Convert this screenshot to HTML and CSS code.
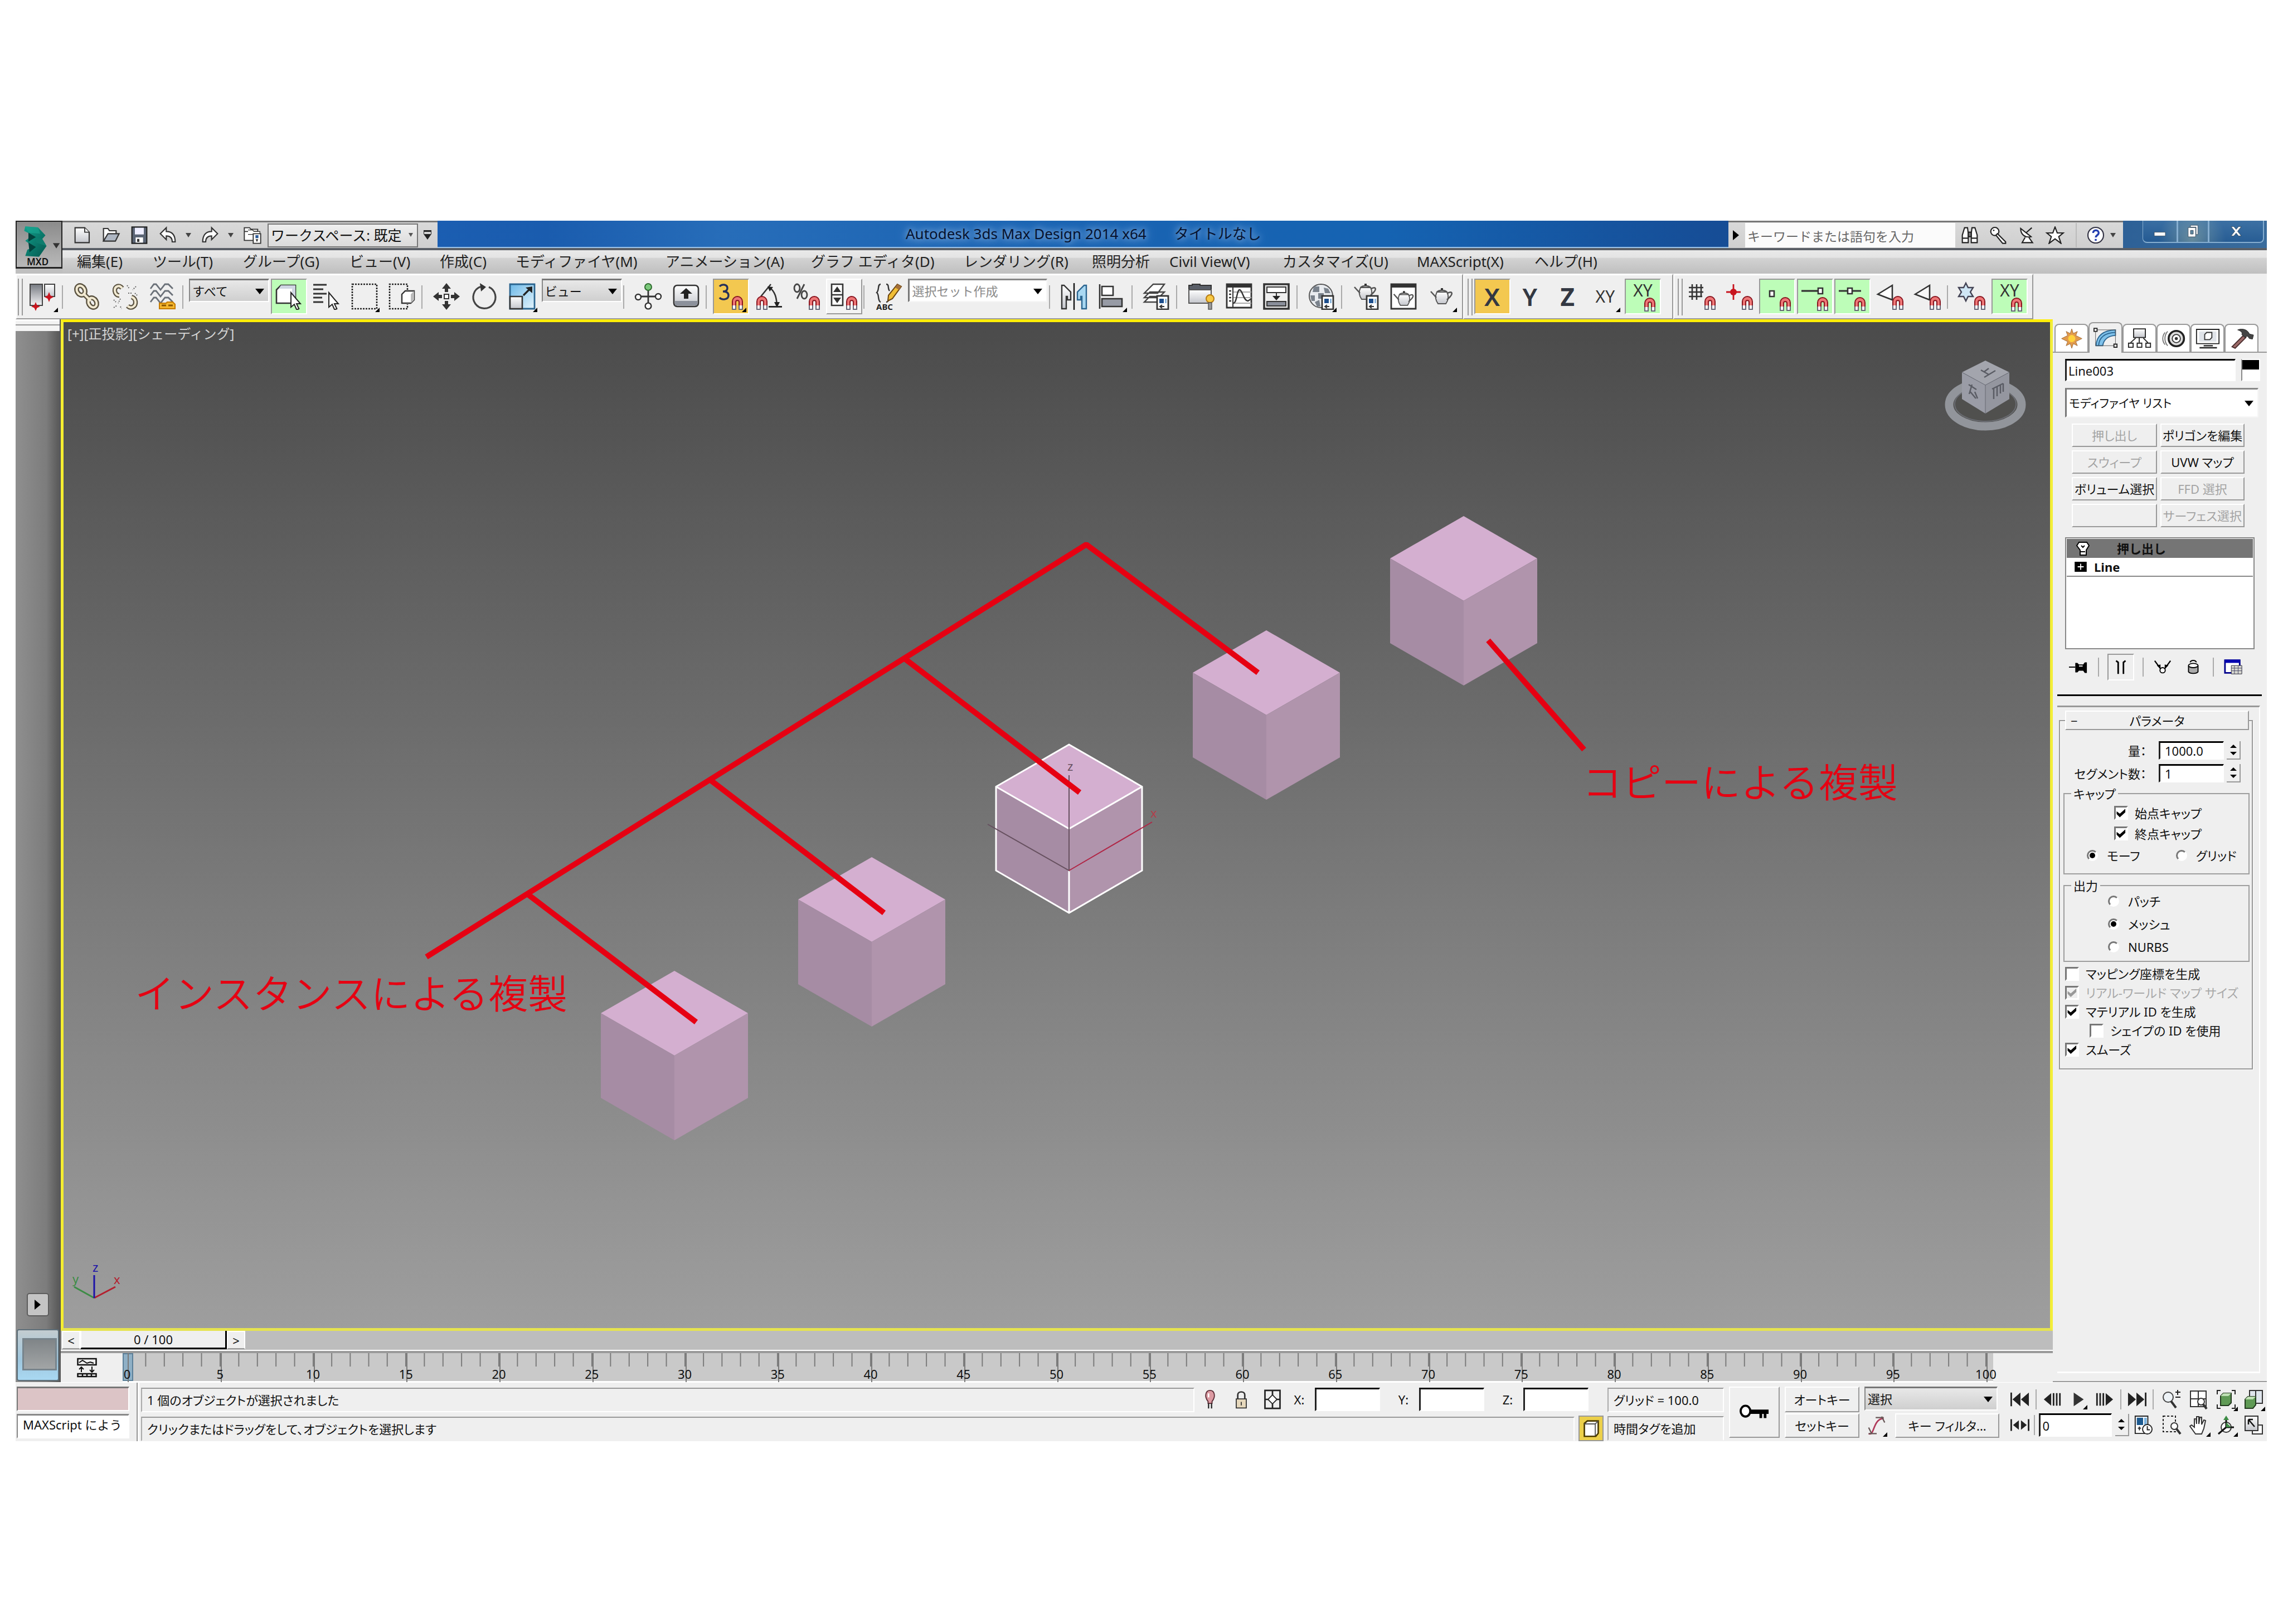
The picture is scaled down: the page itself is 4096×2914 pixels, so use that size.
FILE: index.html
```html
<!DOCTYPE html>
<html lang="ja">
<head>
<meta charset="utf-8">
<title>Autodesk 3ds Max Design 2014 x64 タイトルなし</title>
<link rel="stylesheet" href="styles.css">
</head>
<body>
<svg class="defs" aria-hidden="true">
  <defs>
    <linearGradient id="gTeal" x1="0" y1="0" x2="1" y2="1"><stop offset="0" stop-color="#12a08c"/><stop offset="1" stop-color="#04584f"/></linearGradient>
    <linearGradient id="gGray" x1="0" y1="0" x2="0" y2="1"><stop offset="0" stop-color="#fff"/><stop offset="1" stop-color="#c4c6cc"/></linearGradient>
    <linearGradient id="gDark" x1="0" y1="0" x2="0" y2="1"><stop offset="0" stop-color="#777b82"/><stop offset="1" stop-color="#f2f2f4"/></linearGradient>
    <linearGradient id="gBlue" x1="0" y1="0" x2="1" y2="1"><stop offset="0" stop-color="#6db9e8"/><stop offset="1" stop-color="#e4f4fc"/></linearGradient>
    <linearGradient id="gView" x1="0" y1="0" x2="0" y2="1"><stop offset="0" stop-color="#4b4b4b"/><stop offset="1" stop-color="#9e9e9e"/></linearGradient>
    <symbol id="mag" viewBox="0 0 24 24"><path d="M13.5 23.5V16.5a4.5 4.5 0 0 1 9 0v7h-3v-6.500a1.500 1.500 0 0 0-3 0v6.500z" fill="#e77" stroke="#8a1620"/><path d="M14 20h2v3h-2zM20 20h2v3h-2z" fill="#fff"/><path d="M13.500 20v3.500h3V20M19.500 20v3.500h3V20" fill="none" stroke="#667"/></symbol>
    <symbol id="page" viewBox="0 0 24 24"><rect x="12.500" y="11.500" width="10" height="12" fill="#fff" stroke="#333" stroke-width="1.400"/><path d="M14.500 14h4v4h-4z" fill="#1d4e8c"/><path d="M19.500 14h1.500v4h-1.500z" fill="#8bb6dd"/><path d="M15 21h4M17 19.500l-2 1.500 2 1.500" stroke="#333" fill="none"/></symbol>
    <symbol id="pot" viewBox="0 0 24 24"><path d="M8 8C6.500 11 6.500 15 9 18.500h7c2.500-3.500 2.500-7.500 1-10.500z" fill="url(#gGray)" stroke="#555"/><path d="M8 8c2-2 7-2 9 0M7.500 13L2.500 7.500M17.500 9c4-2 5 0 2.500 3l-3 3" fill="none" stroke="#555" stroke-width="1.300"/><path d="M11.500 6.200h2V4.500h-2z" fill="#333"/></symbol>
    <symbol id="cursor" viewBox="0 0 24 24"><path d="M14 8.500v13l3-2.500 2.200 5 2-1-2.200-4.500h3.500z" fill="#fff" stroke="#222"/></symbol>
  </defs>
</svg>

<main class="app">
  <header class="head">
    <button class="appbtn" aria-label="MXD">
      <svg viewBox="0 0 84 86"><g transform="translate(0 2) scale(1 .84)"><path d="M14 8l24 2 14 18-6 8 8 16-14 24-26-2 4-14 12-6-16-14 14-12-16-10z" fill="url(#gTeal)"/><path d="M20 22l14 10-14 10M20 44l14 10-12 12" fill="#02423c"/><path d="M34 32l12 4 8 16-20-8z" fill="#0d7d6e"/><path d="M14 8l24 2 4 14-22-2z" fill="#1aa893" opacity=".6"/></g><path d="M66 40h13l-6.500 10z" fill="#333"/></svg>
      <span>MXD</span>
    </button>
    <div class="titlebar">
      <div class="qat">
        <button class="q" aria-label="新規"><svg viewBox="0 0 24 24"><path d="M2 2h13l6 6v14H2z" fill="url(#gGray)" stroke="#333" stroke-width="1.600"/><path d="M15 2v6h6" fill="#fff" stroke="#333" stroke-width="1.400"/></svg></button>
        <button class="q" aria-label="開く"><svg viewBox="0 0 24 24"><path d="M2 20V3h6l2 3h9v4" fill="#fff" stroke="#333" stroke-width="1.600"/><path d="M2 20l6-10h15l-5 10z" fill="#aeb6c2" stroke="#333" stroke-width="1.600"/></svg></button>
        <button class="q" aria-label="保存"><svg viewBox="0 0 24 24"><path d="M2 1h20v22H2z" fill="#5a6474" stroke="#222" stroke-width="1.600"/><path d="M6 2h12v9H6z" fill="#eef"/><path d="M7 15h10v7H7z" fill="#fff"/><path d="M9 17h3v4H9z" fill="#333"/></svg></button>
        <button class="q" aria-label="元に戻す"><svg viewBox="0 0 24 24"><path d="M2 10l8-8v5c8 0 12 5 12 14h-4c0-5-2-8-8-8v5z" fill="#fff" stroke="#333" stroke-width="1.600"/></svg></button>
        <i class="tri sm"></i>
        <button class="q" aria-label="やり直し"><svg viewBox="0 0 24 24"><path d="M22 10l-8-8v5C6 7 2 12 2 21h4c0-5 2-8 8-8v5z" fill="#fff" stroke="#333" stroke-width="1.600"/></svg></button>
        <i class="tri sm"></i>
        <button class="q" aria-label="プロジェクト"><svg viewBox="0 0 24 24"><path d="M1 19V2h7l2 2h9v15zM1 7h18" fill="#fff" stroke="#333" stroke-width="1.400"/><path d="M6 5h6l2 2h8v4H6" fill="#fff" stroke="#333"/><path d="M13 10h10v13H13z" fill="#fff" stroke="#333" stroke-width="1.400"/><path d="M16 12h4v4h-4z" fill="#2a5a98"/><path d="M17 18l1 2 1-2z" stroke="#333"/></svg></button>
        <span class="combo ws"><select aria-label="ワークスペース"><option>ワークスペース: 既定</option></select></span>
        <i class="tri bar"></i>
      </div>
      <h1 class="caption"><span>Autodesk 3ds Max Design 2014 x64</span><span>タイトルなし</span></h1>
      <div class="info">
        <i class="triR"></i>
        <input class="search" type="text" placeholder="キーワードまたは語句を入力" aria-label="検索">
        <button class="q" aria-label="検索"><svg viewBox="0 0 24 24"><path d="M5 2h4l1 8v12H2V12zM15 2h4l3 10v10h-8V10z" fill="#fff" stroke="#222" stroke-width="1.600"/><path d="M10 8h4v6h-4zM2 16h8M14 16h8" stroke="#222" stroke-width="1.600" fill="#777"/></svg></button>
        <button class="q" aria-label="サブスクリプション"><svg viewBox="0 0 24 24"><circle cx="7.500" cy="7" r="5.500" fill="#fff" stroke="#222" stroke-width="1.600"/><path d="M11 10l11 11v2h-4L9 12z" fill="#fff" stroke="#222" stroke-width="1.600"/><circle cx="6" cy="5.500" r="1" fill="#222"/></svg></button>
        <button class="q" aria-label="通信センター"><svg viewBox="0 0 24 24"><path d="M4 3c0 8 6 13 14 11z" fill="#fff" stroke="#222" stroke-width="1.600"/><path d="M11 9l8-7M10 15l-4 7h14l-5-7" fill="#fff" stroke="#222" stroke-width="1.600"/></svg></button>
        <button class="q" aria-label="お気に入り"><svg viewBox="0 0 24 24"><path d="M12 1l3 8h8l-6 5 3 9-8-6-8 6 3-9-6-5h8z" fill="#fff" stroke="#222" stroke-width="1.600"/></svg></button>
        <i class="vline"></i>
        <button class="q" aria-label="ヘルプ"><svg viewBox="0 0 24 24"><circle cx="12" cy="12" r="10.500" fill="#fff" stroke="#334" stroke-width="1.600"/><path d="M8.500 9c0-5 7.500-4.500 7.500 0 0 3-4 3-4 6M12 17v2.500" fill="none" stroke="#2540b0" stroke-width="2.600"/></svg></button>
        <i class="tri sm"></i>
      </div>
      <div class="wbtns">
        <button aria-label="最小化"><svg viewBox="0 0 40 36"><path d="M8 20h24v8H8z" fill="#fff" stroke="#345"/></svg></button>
        <button aria-label="元のサイズに戻す"><svg viewBox="0 0 40 36"><path d="M14 5h16v20h-4V9H14z" fill="#fff" stroke="#345"/><path d="M9 10h16v20H9zM14 16v8h6v-8z" fill="#fff" fill-rule="evenodd" stroke="#345"/></svg></button>
        <button aria-label="閉じる"><svg viewBox="0 0 40 36"><path d="M9 8h6l5 6 5-6h6l-8 10 8 10h-6l-5-6-5 6H9l8-10z" fill="#fff" stroke="#345"/></svg></button>
      </div>
    </div>
    <nav class="menu">
      <a href="#">編集(E)</a><a href="#">ツール(T)</a><a href="#">グループ(G)</a><a href="#">ビュー(V)</a><a href="#">作成(C)</a><a href="#">モディファイヤ(M)</a><a href="#">アニメーション(A)</a><a href="#">グラフ エディタ(D)</a><a href="#">レンダリング(R)</a><a href="#">照明分析</a><a href="#">Civil View(V)</a><a href="#">カスタマイズ(U)</a><a href="#">MAXScript(X)</a><a href="#">ヘルプ(H)</a>
    </nav>
  </header>

  <div class="toolbars">
    <div class="tb tb-main">
      <i class="grip"></i>
      <button class="t more" aria-label="キー"><svg viewBox="0 0 24 24"><path d="M1 1h11v19H1z" fill="url(#gDark)" stroke="#444"/><path d="M14 1h9v11h-9z" fill="url(#gGray)" stroke="#444"/><path d="M6 17l1.200 2.800L10 21l-2.800 1.200L6 25l-1.200-2.800L2 21l2.800-1.200zM18 8l1.200 3L22 12.500 19.200 14 18 17l-1.200-3L14 12.500l2.800-1.500z" fill="#c8141e"/></svg></button>
      <i class="sep"></i>
      <button class="t" aria-label="リンク"><svg viewBox="0 0 24 24"><g fill="none" stroke="#5a5240" stroke-width="4.400"><ellipse cx="6.500" cy="6.500" rx="3.500" ry="4.500" transform="rotate(-30 6.500 6.500)"/><ellipse cx="17" cy="17.500" rx="3.500" ry="4.500" transform="rotate(-30 17 17.500)"/><path d="M8.500 9l7 7"/></g><g fill="none" stroke="#f2ead2" stroke-width="2"><ellipse cx="6.500" cy="6.500" rx="3.500" ry="4.500" transform="rotate(-30 6.500 6.500)"/><ellipse cx="17" cy="17.500" rx="3.500" ry="4.500" transform="rotate(-30 17 17.500)"/><path d="M8.500 9l7 7"/></g></svg></button>
      <button class="t" aria-label="リンク解除"><svg viewBox="0 0 24 24"><g fill="none" stroke="#5a5240" stroke-width="4.200"><path d="M9.500 4.500C7 1 2.500 3 3 7c.300 2 1.500 4 4 4M14.500 20.500c3 3 7.500.5 7-4-.3-2-1.500-3.500-3.500-4"/></g><g fill="none" stroke="#f2ead2" stroke-width="2"><path d="M9.500 4.500C7 1 2.500 3 3 7c.300 2 1.500 4 4 4M14.500 20.500c3 3 7.500.5 7-4-.3-2-1.500-3.500-3.500-4"/></g><path d="M14 2l2 3M22 3l-3 3M15 9h3M21 9l2 2M2 15l2 2M8 14l-2 4M2 22l3-2M8 21l1 2" stroke="#666" stroke-dasharray="1 1"/></svg></button>
      <button class="t" aria-label="バインド"><svg viewBox="0 0 24 24"><path d="M1 5l3-4h2l4 5 4-5h3l4 4M1 11l3-4h2l4 5 4-5h3l4 4M1 17l3-4h2l4 5 4-5h3l4 4" fill="none" stroke="#6a7078" stroke-width="1.400"/><path d="M9 18h6l1-1h5l2 2v4H9z" fill="#f3b62e" stroke="#c47a00"/><path d="M11 20h4M17 20h4" stroke="#8a5500" stroke-width="1.500"/></svg></button>
      <i class="sep"></i>
      <span class="combo grey c144"><select aria-label="選択フィルタ"><option>すべて</option></select></span>
      <button class="t on" aria-label="オブジェクトを選択"><svg viewBox="0 0 24 24"><path d="M1 6l4-4h13v12l-3 4H1z" fill="#fff" stroke="#333" stroke-width="1.300"/><path d="M5 2h13v12l-3 3V5H3z" fill="#cfd6e2"/><use href="#cursor"/></svg></button>
      <button class="t" aria-label="名前で選択"><svg viewBox="0 0 24 24"><path d="M0 1.500h12M0 5.500h9M0 9.500h12M0 13h8M0 17h9" stroke="#333" stroke-width="1.400"/><use href="#cursor"/></svg></button>
      <button class="t more" aria-label="矩形選択領域"><svg viewBox="0 0 24 24"><path d="M1 1h22v22H1z" fill="none" stroke="#222" stroke-width="1.300" stroke-dasharray="1.500 1"/></svg></button>
      <button class="t" aria-label="ウィンドウ/交差"><svg viewBox="0 0 24 24"><path d="M17 6V1H1v22h16v-4" fill="none" stroke="#222" stroke-width="1.300" stroke-dasharray="1.500 1"/><path d="M12 10l3-3h8v8l-3 3h-8z" fill="#fff" stroke="#333" stroke-width="1.200"/><path d="M20 10v8l3-3V7z" fill="#bbb"/></svg></button>
      <i class="sep"></i>
      <button class="t" aria-label="移動"><svg viewBox="0 0 24 24"><path d="M12 0l4 5h-2.500v3h-3V5H8zM12 24l-4-5h2.500v-3h3v3H16zM0 12l5-4v2.500h3v3H5V16zM24 12l-5 4v-2.500h-3v-3h3V8z" fill="#333"/><path d="M10 10h4v4h-4z" fill="#fff" stroke="#333"/></svg></button>
      <button class="t" aria-label="回転"><svg viewBox="0 0 24 24"><path d="M16 3.500a10 10 0 1 1-7.500-.2" fill="none" stroke="#444" stroke-width="1.600"/><path d="M8 0l5.500 3.500L9 7.500z" fill="#333"/></svg></button>
      <button class="t more" aria-label="スケール"><svg viewBox="0 0 24 24"><path d="M1 1h22v22H1z" fill="url(#gBlue)" stroke="#2b6590" stroke-width="1.400"/><path d="M1 12h11v11H1z" fill="url(#gGray)" stroke="#333" stroke-width="1.300"/><path d="M13 11l6-6" stroke="#222" stroke-width="1.600"/><path d="M21 3v6l-6-5z" fill="#222"/></svg></button>
      <span class="combo grey c144"><select aria-label="参照座標系"><option>ビュー</option></select></span>
      <i class="sep"></i>
      <button class="t" aria-label="基点"><svg viewBox="0 0 24 24"><path d="M12 6v12M5 12h14" stroke="#333" stroke-width="1.400"/><ellipse cx="12" cy="3.500" rx="3" ry="3" fill="#7bc87b" stroke="#2d6b2d"/><g fill="#fff" stroke="#333" stroke-width="1.200"><circle cx="3" cy="12.500" r="2.500"/><circle cx="21" cy="12" r="2.500"/><circle cx="12" cy="20.500" r="2.700"/></g></svg></button>
      <button class="t" aria-label="マニピュレート"><svg viewBox="0 0 24 24"><rect x="1" y="2" width="22" height="19" rx="3" fill="url(#gGray)" stroke="#333" stroke-width="1.300"/><path d="M2 16h20v4H2z" fill="#8c919b"/><path d="M12 4.500l5.500 5H14V14h-4V9.500H6.500z" fill="#222"/></svg></button>
      <i class="sep"></i>
      <button class="t amber more" aria-label="スナップ 3"><svg viewBox="0 0 24 24"><path d="M2 3c2-2.500 7-2 7 1.500 0 2.500-2 3-4 3 2 0 5 .5 5 3.500 0 4-6 4.500-8 2" fill="none" stroke="#26305a" stroke-width="1.700"/><use href="#mag"/></svg></button>
      <button class="t" aria-label="角度スナップ"><svg viewBox="0 0 24 24"><path d="M5 12L14 1M13 4c5 4 6 9 6.500 16" fill="none" stroke="#333" stroke-width="1.300"/><path d="M11 3l5 .5-3 4zM17 17h5l-2.500 5zM12 20.500h12v1.400H12z" fill="#222"/><use href="#mag" x="-12"/></svg></button>
      <button class="t" aria-label="パーセントスナップ"><svg viewBox="0 0 24 24"><g fill="none" stroke="#444" stroke-width="1.400"><ellipse cx="3.500" cy="4.500" rx="2.500" ry="3.500"/><ellipse cx="10" cy="10.500" rx="2.500" ry="3.500"/><path d="M10 1L3.500 14"/></g><use href="#mag" x="1"/></svg></button>
      <button class="t raised" aria-label="スピナースナップ"><svg viewBox="0 0 24 24"><path d="M1 1h10v19H1zM1 10.500h10" fill="#fff" stroke="#333" stroke-width="1.300"/><path d="M6 3l3.500 5h-7zM6 18l-3.500-5h7z" fill="#333"/><use href="#mag" x="1"/></svg></button>
      <i class="sep"></i>
      <button class="t" aria-label="名前付き選択セット"><svg viewBox="0 0 24 24"><path d="M5 1C2 1 4 6 1.500 8.500 4 10 2 16 5 17M10 1c3 0 1 4 3 6M10 17c3 0 1-3 3-5" fill="none" stroke="#333" stroke-width="1.200"/><path d="M20 1l3.500 2-8 11-4 2 .5-5z" fill="#f0bd35" stroke="#6a4310"/><path d="M20 1l3.500 2-2 3-3.500-2z" fill="#a5703a"/><text x="1" y="24" font-size="7.500" font-weight="bold" fill="#222">ABC</text></svg></button>
      <span class="combo white c250"><select aria-label="選択セット作成"><option>選択セット作成</option></select></span>
      <i class="sep"></i>
      <button class="t" aria-label="ミラー"><svg viewBox="0 0 24 24"><path d="M1 23V2h2l6 6v7H6v-3H5v11z" fill="url(#gGray)" stroke="#333" stroke-width="1.200"/><path d="M23 23V2h-2l-6 6v7h3v-3h1v11z" fill="#a9d8f2" stroke="#2b6590" stroke-width="1.200"/><path d="M12 0v24" stroke="#111" stroke-width="1.200"/></svg></button>
      <button class="t more" aria-label="位置合わせ"><svg viewBox="0 0 24 24"><path d="M1 1v22" stroke="#333" stroke-width="1.300"/><path d="M3 3h10v8H3z" fill="#fff" stroke="#333" stroke-width="1.300"/><path d="M3 14h18v7H3z" fill="#979ba5" stroke="#333" stroke-width="1.300"/></svg></button>
      <i class="sep"></i>
      <button class="t" aria-label="レイヤ管理"><svg viewBox="0 0 24 24"><g fill="#fff" stroke="#444" stroke-width="1.200"><path d="M1 17l5-5h13l-5 5zM1 13l5-5h13l-5 5zM1 9l8-8h10l-6 8z"/></g><use href="#page"/></svg></button>
      <i class="sep"></i>
      <button class="t" aria-label="グラファイト"><svg viewBox="0 0 24 24"><path d="M1 5V2h3V1h7v1h10v15H1z" fill="#5a5f68" stroke="#333"/><path d="M1 6h20v12H1z" fill="url(#gGray)" stroke="#555"/><circle cx="20" cy="14" r="3.500" fill="#f7c945" stroke="#b77b10"/><path d="M18.500 17.500h3v6h-3z" fill="#999" stroke="#555" stroke-width=".7"/></svg></button>
      <button class="t" aria-label="カーブエディタ"><svg viewBox="0 0 24 24"><path d="M1 1h22v21H1z" fill="#fff" stroke="#333" stroke-width="1.400"/><path d="M1 1h22v3H1z" fill="#333"/><path d="M7 8h16M7 18h16M7 13h16" stroke="#aaa"/><path d="M6.500 4v18" stroke="#333"/><path d="M3 7h2M3 10h2M3 13h2M3 16h2" stroke="#333" stroke-width="1.300"/><path d="M7 18c3 0 3-12 5.500-12S16 16 20 16l3-2" fill="none" stroke="#333" stroke-width="1.200"/></svg></button>
      <button class="t" aria-label="スケマティックビュー"><svg viewBox="0 0 24 24"><path d="M1 1h22v22H1z" fill="#eee" stroke="#333" stroke-width="1.800"/><path d="M3.500 3.500h17v5h-17z" fill="#fff" stroke="#333"/><path d="M3.500 16.500h17v4h-17z" fill="#8a8f9a" stroke="#333"/><path d="M12 8.500V12" stroke="#333"/><path d="M8.500 11.500h7L12 15.500z" fill="#222"/></svg></button>
      <i class="sep"></i>
      <button class="t more" aria-label="マテリアルエディタ"><svg viewBox="0 0 24 24"><circle cx="11.500" cy="11.500" r="10.500" fill="#e8ebef" stroke="#555"/><path d="M5 3h5v5H4zM14 4l4 1 2 4h-5zM9 9h5v5H9zM2 11h4v5H3zM6 17l4-2 1 6H8z" fill="#7a828c"/><use href="#page"/></svg></button>
      <i class="sep"></i>
      <button class="t" aria-label="レンダリング設定"><svg viewBox="0 0 24 24"><use href="#pot" x="-1" y="-4"/><use href="#page"/></svg></button>
      <button class="t" aria-label="レンダリングウィンドウ"><svg viewBox="0 0 24 24"><path d="M1 1h22v22H1z" fill="#fff" stroke="#333" stroke-width="1.400"/><path d="M1 1h22v3H1z" fill="#333"/><use href="#pot" x="1" y="3" width="22" height="22"/></svg></button>
      <button class="t more" aria-label="レンダリング"><svg viewBox="0 0 24 24"><use href="#pot"/></svg></button>
    </div>
    <div class="tb tb-axis">
      <i class="grip"></i>
      <button class="t amber big">X</button><button class="t big">Y</button><button class="t bigger">Z</button><button class="t more mid">XY</button>
      <button class="t on mid up">XY<svg class="lay" viewBox="0 0 24 24"><use href="#mag" y="1"/></svg></button>
    </div>
    <div class="tb tb-snap">
      <i class="grip"></i>
      <button class="t" aria-label="グリッド点"><svg viewBox="0 0 24 24"><path d="M3 1v14M7 1v14M11 1v11M0 4h13M0 8h13M0 12h12" stroke="#333" stroke-width="1.300"/><use href="#mag" x="1"/></svg></button>
      <button class="t" aria-label="基点"><svg viewBox="0 0 24 24"><path d="M6.500 1v14M0 8h13" stroke="#c8141e" stroke-width="1.400"/><circle cx="6.500" cy="8" r="3" fill="#c8141e"/><use href="#mag" x="1"/></svg></button>
      <button class="t on" aria-label="頂点"><svg viewBox="0 0 24 24"><path d="M5 7h4v5H5z" fill="#fff" stroke="#333" stroke-width="1.300"/><use href="#mag" x="1" y="1"/></svg></button>
      <button class="t on" aria-label="終点"><svg viewBox="0 0 24 24"><path d="M0 7h16" stroke="#333" stroke-width="1.600"/><path d="M15 4.500h4v5h-4z" fill="#fff" stroke="#333" stroke-width="1.300"/><use href="#mag" x="1" y="1"/></svg></button>
      <button class="t on" aria-label="中点"><svg viewBox="0 0 24 24"><path d="M0 7h20" stroke="#333" stroke-width="1.600"/><path d="M8 4.500h4v5H8z" fill="#fff" stroke="#333" stroke-width="1.300"/><use href="#mag" x="1" y="1"/></svg></button>
      <button class="t" aria-label="エッジ"><svg viewBox="0 0 24 24"><path d="M1 10L14 2v13z" fill="#fff" stroke="#333" stroke-width="1.300"/><use href="#mag" x="1"/></svg></button>
      <button class="t" aria-label="フェース"><svg viewBox="0 0 24 24"><path d="M1 10L14 2v13z" fill="#f8f8f8" stroke="#333" stroke-width="1.300"/><use href="#mag" x="1"/></svg></button>
      <i class="sep"></i>
      <button class="t" aria-label="フリーズ"><svg viewBox="0 0 24 24"><path d="M6.500 0l2 4h4.500l-2.500 4 2.500 4H8.500l-2 4-2-4H0l2.500-4L0 4h4.500z" fill="#cfe6f5" stroke="#445" stroke-width="1.200"/><use href="#mag" x="1"/></svg></button>
      <button class="t on mid up">XY<svg class="lay" viewBox="0 0 24 24"><use href="#mag" y="1"/></svg></button>
    </div>
  </div>

  <div class="work">
    <aside class="rail">
      <div class="railtop"></div>
      <button class="expand" aria-label="展開"><i class="triR"></i></button>
      <div class="swatch"><div></div></div>
    </aside>

    <section class="center">
      <div class="viewport">
        <svg class="scene" viewBox="114 578 3564 1805">
          <defs>
            <g id="cube"><path d="M0 0L132 76 0 152-132 76z" fill="#d4afd0"/><path d="M-132 76L0 152V304L-132 228z" fill="#a68ca4"/><path d="M132 76L0 152V304L132 228z" fill="#b094ac"/></g>
          </defs>
          <rect x="114" y="578" width="3564" height="1805" fill="url(#gView)"/>
          <text x="121" y="608" class="vlabel">[+][正投影][シェーディング]</text>
          <g>
            <ellipse cx="3562" cy="726" rx="65" ry="39" fill="#50504e" stroke="#92959b" stroke-width="15"/>
            <ellipse cx="3562" cy="725" rx="55" ry="31" fill="none" stroke="#6a6c72" stroke-width="2"/>
            <path d="M3562 647L3605 668 3562 691 3520 668z" fill="#a3a5ad"/><path d="M3520 668L3562 691V742L3520 716z" fill="#9a9ca6"/><path d="M3605 668L3562 691V742L3605 716z" fill="#94969f"/>
            <path d="M3520 668L3562 691 3605 668M3562 691V742" fill="none" stroke="#666872" stroke-width="1"/>
            <g stroke="#5a5c64" stroke-width="2.500" fill="none"><path d="M3554 664l14 8M3568 661l-8 6M3580 665l-20 12M3532 690l14 9M3538 690l-5 17M3535 703l10 12M3543 703l5 12M3574 698l20-10M3577 696v20M3583 693v18M3589 690v16M3594 688v15"/></g>
          </g>
          <use href="#cube" x="1210" y="1742"/><use href="#cube" x="1564" y="1538"/><use href="#cube" x="1918" y="1335"/><use href="#cube" x="2272" y="1131"/><use href="#cube" x="2626" y="926"/>
          <path d="M1918 1336L2049 1411.500V1562L1918 1638 1787 1562V1411.500zM1787 1411.500L1918 1487 2049 1411.500M1918 1562V1638" fill="none" stroke="#fff" stroke-width="3"/>
          <g fill="none" stroke-width="2"><path d="M1918 1391V1562L1772 1479" stroke="#66505f"/><path d="M1918 1562L2067 1475" stroke="#b02545"/></g>
          <text x="1915" y="1383" class="ax" fill="#66505f">z</text>
          <text x="2064" y="1467" class="ax" fill="#b0404c">x</text>
          <g fill="none" stroke="#e60012" stroke-width="10"><path d="M765 1717L1949 977 2257 1207M1622 1181L1937 1422M1275 1400L1586 1638M946 1604L1249 1834M2670 1149L2842 1345" stroke-linejoin="bevel"/></g>
          <text x="242" y="1809" class="note">インスタンスによる複製</text>
          <text x="2839" y="1430" class="note">コピーによる複製</text>
          <g fill="none" stroke-width="3"><path d="M169 2329L133 2309" stroke="#3d8c46"/><path d="M169 2329L207 2309" stroke="#b3202f"/><path d="M169 2329V2288" stroke="#1c12a8"/></g>
          <text x="166" y="2282" class="ax" fill="#1c12a8">z</text><text x="130" y="2303" class="ax" fill="#3d8c46">y</text><text x="204" y="2304" class="ax" fill="#b3202f">x</text>
        </svg>
      </div>
      <div class="slider"><button>&lt;</button><button class="thumb">0 / 100</button><button>&gt;</button></div>
      <div class="track">
        <button class="mini" aria-label="ミニカーブエディタ"><svg viewBox="0 0 36 36"><path d="M1.500 2h33v11h-33zM1.500 29h33v5h-33zM10 29v5M18 29v5M26 29v5" fill="none" stroke="#111" stroke-width="2.500"/><path d="M4 9l6-4 8 5 6-2 6 2" fill="none" stroke="#111" stroke-width="2"/><path d="M8 26V18M4 21l4-4 4 4M27 16v9M23 22l4 4 4-4" fill="none" stroke="#111" stroke-width="2"/></svg></button>
        <div class="ruler">
          <span class="now"></span>
          <div class="ticks">
            <div><b>0</b></div><div><b>5</b></div><div><b>10</b></div><div><b>15</b></div><div><b>20</b></div><div><b>25</b></div><div><b>30</b></div><div><b>35</b></div><div><b>40</b></div><div><b>45</b></div><div><b>50</b></div><div><b>55</b></div><div><b>60</b></div><div><b>65</b></div><div><b>70</b></div><div><b>75</b></div><div><b>80</b></div><div><b>85</b></div><div><b>90</b></div><div><b>95</b></div>
          </div>
          <div class="last"><b>100</b></div>
        </div>
      </div>
    </section>

    <aside class="panel">
      <div class="tabs">
        <button aria-label="作成"><svg viewBox="0 0 48 40"><path d="M24 1l3 9 8-4-3 8 12 6-12 6 3 8-8-4-3 9-3-9-8 4 3-8L4 20l12-6-3-8 8 4z" fill="#e29a4c" stroke="#9c6a3a"/><circle cx="24" cy="20" r="7" fill="#ffd23c"/></svg></button>
        <button class="cur" aria-label="修正"><svg viewBox="0 0 48 40"><path d="M5 35C6 16 18 5 43 4v11C28 16 20 23 18 35z" fill="#7ec1ea" stroke="#2b6590" stroke-width="2"/><path d="M10 35C11 20 21 10 43 9" fill="none" stroke="#2b6590" stroke-width="2"/><path d="M4 4h39M4 4v31h39V4" fill="none" stroke="#555"/><path d="M1 1h6v6H1zM40 32h6v6h-6z" fill="#fff" stroke="#222" stroke-width="2"/></svg></button>
        <button aria-label="階層"><svg viewBox="0 0 48 40"><path d="M12 1h23v17H12z" fill="url(#gGray)" stroke="#222" stroke-width="2"/><path d="M23 18v10M16 19L6 28M31 19l9 9" stroke="#222" stroke-width="2"/><path d="M2 29h9v8H2zM19 29h9v8h-9zM36 29h9v8h-9z" fill="#fff" stroke="#222" stroke-width="2"/></svg></button>
        <button aria-label="モーション"><svg viewBox="0 0 48 40"><circle cx="29" cy="20" r="15" fill="#ddd" stroke="#222" stroke-width="4"/><circle cx="29" cy="20" r="8" fill="#fff" stroke="#333" stroke-width="2"/><circle cx="29" cy="20" r="3" fill="#333"/><path d="M12 6C5 14 5 26 12 34M7 8C1 15 1 25 7 32" fill="none" stroke="#777" stroke-width="2"/></svg></button>
        <button aria-label="表示"><svg viewBox="0 0 48 40"><path d="M2 2h44v28H2z" fill="#fff" stroke="#222" stroke-width="2"/><path d="M7 6h34v20H7z" fill="#dfe3e8"/><path d="M18 12l4-4h10v10l-4 4H18z" fill="#fff" stroke="#333" stroke-width="2"/><path d="M16 34h18M8 38h34" stroke="#222" stroke-width="2.500"/></svg></button>
        <button aria-label="ユーティリティ"><svg viewBox="0 0 48 40"><path d="M5 36L27 14l5 4L11 39z" fill="#9c6a68" stroke="#4a2e2e" stroke-width="2"/><path d="M16 3c10-4 20 0 23 8l8 2-2 8-6-1-4-5-5 3-6-6c2-4-2-7-8-9z" fill="#444" stroke="#222"/></svg></button>
      </div>
      <div class="namerow"><input type="text" value="Line003" aria-label="名前"><span class="color"></span></div>
      <span class="combo white modlist"><select aria-label="モディファイヤ リスト"><option>モディファイヤ リスト</option></select></span>
      <div class="mods">
        <button disabled>押し出し</button><button>ポリゴンを編集</button>
        <button disabled>スウィープ</button><button>UVW マップ</button>
        <button>ボリューム選択</button><button disabled>FFD 選択</button>
        <button disabled aria-label="空"></button><button disabled>サーフェス選択</button>
      </div>
      <ul class="stack">
        <li class="sel"><svg viewBox="0 0 24 28"><path d="M5 3h14l4 6-5 8v9H7v-9L1 9z" fill="#fff" stroke="#000" stroke-width="2"/><path d="M8 20h8M9 9l3 3 3-3" stroke="#000" fill="none" stroke-width="2"/></svg><span>押し出し</span></li>
        <li><svg viewBox="0 0 24 20"><path d="M0 0h24v20H0z"/><path d="M6 10h12M12 4v12" stroke="#fff" stroke-width="2"/></svg><span>Line</span></li>
      </ul>
      <div class="stacktools">
        <button aria-label="スタックをピン固定"><svg viewBox="0 0 36 30"><path d="M0 15h12" stroke="#000" stroke-width="2"/><path d="M12 7h4l3 3h8l3-4h4v20h-4l-3-4h-8l-3 3h-4z"/><path d="M19 13h7" stroke="#fff" stroke-width="2"/></svg></button>
        <i></i>
        <button class="pressed" aria-label="最終結果表示"><svg viewBox="0 0 36 30"><path d="M9 3l4 3v22M27 3l-4 3v22" fill="none" stroke="#000" stroke-width="3"/></svg></button>
        <i></i>
        <button aria-label="固有にする"><svg viewBox="0 0 36 30"><path d="M3 3l11 15M33 3L22 18" stroke="#000" stroke-width="2.500"/><circle cx="18" cy="21" r="5" fill="#fff" stroke="#000" stroke-width="2"/><path d="M7 12l7 6v-8zM29 12l-7 6v-8z"/></svg></button>
        <button aria-label="モディファイヤを除去"><svg viewBox="0 0 36 30"><path d="M9 12v12c3 4 15 4 18 0V12" fill="#aaa" stroke="#000" stroke-width="2"/><ellipse cx="18" cy="12" rx="9" ry="4" fill="#fff" stroke="#000" stroke-width="2"/><path d="M12 6c2-5 10-5 12 0" fill="none" stroke="#000" stroke-width="2"/></svg></button>
        <i></i>
        <button aria-label="モディファイヤセットを設定"><svg viewBox="0 0 36 30"><path d="M2 2h28v24H2z" fill="#fff" stroke="#00008c" stroke-width="3"/><path d="M2 1h28v6H2z" fill="#0000b0"/><path d="M14 12h20v16H14z" fill="#d8d8d0" stroke="#223"/><path d="M14 17h20M14 22h20M20 12v16M27 12v16" stroke="#446"/></svg></button>
      </div>
      <hr class="rule">
      <div class="scroll">
        <section class="rollout">
          <button class="rhead"><span>−</span><span>パラメータ</span></button>
          <div class="num"><label for="amt">量：</label><input id="amt" type="text" value="1000.0"><span class="spin"><i></i><i></i></span></div>
          <div class="num"><label for="seg">セグメント数：</label><input id="seg" type="text" value="1"><span class="spin"><i></i><i></i></span></div>
          <fieldset class="cap"><legend>キャップ</legend>
            <label class="opt"><input type="checkbox" checked>始点キャップ</label>
            <label class="opt"><input type="checkbox" checked>終点キャップ</label>
            <div class="two"><label class="opt"><input type="radio" name="cap" checked>モーフ</label><label class="opt"><input type="radio" name="cap">グリッド</label></div>
          </fieldset>
          <fieldset class="out"><legend>出力</legend>
            <label class="opt"><input type="radio" name="out">パッチ</label>
            <label class="opt"><input type="radio" name="out" checked>メッシュ</label>
            <label class="opt"><input type="radio" name="out">NURBS</label>
          </fieldset>
          <div class="flags">
            <label class="opt"><input type="checkbox">マッピング座標を生成</label>
            <label class="opt off"><input type="checkbox" checked disabled>リアル-ワールド マップ サイズ</label>
            <label class="opt"><input type="checkbox" checked>マテリアル ID を生成</label>
            <label class="opt sub"><input type="checkbox">シェイプの ID を使用</label>
            <label class="opt"><input type="checkbox" checked>スムーズ</label>
          </div>
        </section>
      </div>
    </aside>
  </div>

  <footer class="status">
    <div class="listener"><div class="macro"></div><div class="script">MAXScript によう</div></div>
    <i class="dbl"></i>
    <div class="prompts">
      <div class="prow">
        <output class="box grow">1 個のオブジェクトが選択されました</output>
        <span class="sicons">
          <button aria-label="分離"><svg viewBox="0 0 40 40"><path d="M20 2c-9 0-12 12-4 22v4h8v-4C32 14 29 2 20 2z" fill="#dc9aa2" stroke="#5a2a34" stroke-width="2"/><path d="M17 28v10M23 28v10" stroke="#222" stroke-width="2.500"/><path d="M17 8v8" stroke="#fff" stroke-width="3"/></svg></button>
          <button aria-label="選択ロック"><svg viewBox="0 0 40 40"><path d="M13 20v-9c0-8 14-8 14 0v9" fill="none" stroke="#333" stroke-width="3"/><path d="M10 19h20v18H10z" fill="#e6d8bc" stroke="#333" stroke-width="2"/><path d="M20 25v7" stroke="#333" stroke-width="2"/></svg></button>
          <button aria-label="絶対モード"><svg viewBox="0 0 40 40"><path d="M5 2h30v36H5zM5 20h8M27 20h8M20 2v10M20 28v10" fill="none" stroke="#222" stroke-width="3"/><path d="M20 11l9 9-9 9-9-9z" fill="#fff" stroke="#222" stroke-width="2"/></svg></button>
        </span>
        <span class="coord"><label for="cx">X:</label><input id="cx" type="text"></span>
        <span class="coord"><label for="cy">Y:</label><input id="cy" type="text"></span>
        <span class="coord"><label for="cz">Z:</label><input id="cz" type="text"></span>
      </div>
      <div class="prow">
        <output class="box grow">クリックまたはドラッグをして、オブジェクトを選択します</output>
        <button class="tagbtn" aria-label="適応劣化"><svg viewBox="0 0 36 36"><path d="M4 8l6-5h22v25l-5 6H4z" fill="#fff" stroke="#4a3a00" stroke-width="3"/><path d="M4 9h22v24M26 9l6-6" fill="none" stroke="#555" stroke-width="2"/></svg></button>
      </div>
    </div>
    <div class="gridcol"><output class="box">グリッド = 100.0</output><output class="box">時間タグを追加</output></div>
    <button class="raise key" aria-label="キーを設定"><svg viewBox="0 0 56 32"><ellipse cx="11" cy="14" rx="9" ry="10" fill="#fff" stroke="#000" stroke-width="4"/><path d="M20 11h34v8h-4v8h-5v-8h-3v8h-5v-8H20z"/></svg></button>
    <div class="keycol"><button class="raise">オートキー</button><button class="raise">セットキー</button></div>
    <div class="filtercol">
      <span class="combo grey"><select aria-label="選択"><option>選択</option></select></span>
      <div><button class="ico more" aria-label="接線"><svg viewBox="0 0 40 40"><path d="M4 36c12 6 8-30 30-30" fill="none" stroke="#b03a5a" stroke-width="3"/><path d="M18 4h16M4 36h16M30 2l6 12M4 24l6 12" stroke="#655" stroke-width="2.500"/></svg></button><button class="raise">キー フィルタ...</button></div>
    </div>
    <div class="play">
      <div>
        <button aria-label="先頭"><svg viewBox="0 0 36 32"><path d="M0 3h3v26H0zM19 3v26L4 16zM35 3v26L20 16z"/></svg></button><i></i>
        <button aria-label="前"><svg viewBox="0 0 36 32"><path d="M16 4v24L2 16zM19 4h3v24h-3zM25 4h3v24h-3zM31 4h3v24h-3z"/></svg></button>
        <button class="more" aria-label="再生"><svg viewBox="0 0 36 32"><path d="M9 3v26l19-13z" fill="#333"/></svg></button>
        <button aria-label="次"><svg viewBox="0 0 36 32"><path d="M20 4v24l14-12zM2 4h3v24H2zM8 4h3v24H8zM14 4h3v24h-3z"/></svg></button><i></i>
        <button aria-label="末尾"><svg viewBox="0 0 36 32"><path d="M33 3h3v26h-3zM1 3v26l15-13zM17 3v26l15-13z"/></svg></button><i></i>
      </div>
      <div>
        <button aria-label="キーモード"><svg viewBox="0 0 36 32"><path d="M0 5h3v22H0zM33 5h3v22h-3zM16 7v18L5 16zM20 7v18l11-9z"/></svg></button><i></i>
        <input type="text" value="0" aria-label="フレーム"><span class="spin"><i></i><i></i></span>
        <button aria-label="時間設定"><svg viewBox="0 0 36 36"><path d="M3 1h24v33H3z" fill="#fff" stroke="#222" stroke-width="2"/><path d="M6 4h12v14H6z" fill="#1d5a90"/><path d="M20 4h5v14h-5z" fill="#7db4de"/><path d="M8 24h6M11 21v7" stroke="#222" stroke-width="2"/><circle cx="26" cy="26" r="9" fill="#fff" stroke="#222" stroke-width="2"/><path d="M26 20v7h5" fill="none" stroke="#222" stroke-width="2"/></svg></button>
      </div>
    </div>
    <div class="nav">
      <button aria-label="ズーム"><svg viewBox="0 0 36 36"><circle cx="12" cy="14" r="9" fill="#eef3f7" stroke="#444" stroke-width="2"/><path d="M17 21l9 12" stroke="#333" stroke-width="4"/><path d="M29 1v9M25 5h9M25 14h9" stroke="#222" stroke-width="2"/></svg></button>
      <button aria-label="すべてズーム"><svg viewBox="0 0 36 36"><path d="M3 3h28v28H3zM17 3v28M3 17h28" fill="#fff" stroke="#333" stroke-width="2"/><circle cx="22" cy="22" r="6" fill="#fff" stroke="#333" stroke-width="2"/><path d="M26 27l6 8" stroke="#333" stroke-width="4"/></svg></button>
      <button class="more" aria-label="全範囲ズーム"><svg viewBox="0 0 36 36"><path d="M2 9V2h6M28 2h6v7M2 27v7h6M28 34h6v-7" fill="none" stroke="#222" stroke-width="2"/><path d="M8 12l5-5h14v17l-5 5H8z" fill="#5f9a55" stroke="#223a1e" stroke-width="2"/><path d="M8 12l5-5h14l-5 5z" fill="#bfe0b4"/></svg></button>
      <button class="more" aria-label="全ビュー範囲ズーム"><svg viewBox="0 0 36 36"><path d="M11 2h23v23H11zM22 2v23" fill="#dfe5ec" stroke="#333" stroke-width="2"/><path d="M3 18l5-5h14v15l-5 6H3z" fill="#5f9a55" stroke="#223a1e" stroke-width="2"/><path d="M3 18l5-5h14l-5 5z" fill="#bfe0b4"/></svg></button>
      <button aria-label="領域ズーム"><svg viewBox="0 0 36 36"><path d="M3 2h22v28H3z" fill="none" stroke="#222" stroke-width="2" stroke-dasharray="4 3"/><circle cx="23" cy="20" r="6" fill="#fff" stroke="#333" stroke-width="2"/><path d="M27 25l7 9" stroke="#333" stroke-width="4"/></svg></button>
      <button class="more" aria-label="パン"><svg viewBox="0 0 36 36"><path d="M12 34L2 20l3-2 5 4V7l3-1 1 10V3h4v13l2-12h3v13l4-8 3 1-3 14-4 10z" fill="#fff" stroke="#333" stroke-width="2"/></svg></button>
      <button class="more" aria-label="オービット"><svg viewBox="0 0 36 36"><circle cx="18" cy="22" r="9" fill="#fff" stroke="#333" stroke-width="2"/><path d="M18 22V6M18 22h14M18 22L4 34" stroke="#111" stroke-width="3"/><path d="M13 9l5-8 5 8zM18 13l9 9h-9z" fill="#3d8c46"/></svg></button>
      <button aria-label="最大化"><svg viewBox="0 0 36 36"><path d="M26 18h8v16H16v-6" fill="#fff" stroke="#333" stroke-width="2"/><path d="M3 2h23v26H3z" fill="url(#gGray)" stroke="#333" stroke-width="2"/><path d="M9 8v9M9 8h8M9 8l11 13" stroke="#111" stroke-width="2.500"/></svg></button>
    </div>
  </footer>
</main>
</body>
</html>
```
FILE: styles.css
```css
* { box-sizing: border-box; }
body {
  margin: 0;
  background: #fff;
  color: #111;
  font-family: "Noto Sans", "Noto Sans CJK JP", sans-serif;
  font-size: 22px;
  line-height: 28px;
  font-feature-settings: "palt";
}
button, input, select { font: inherit; font-feature-settings: inherit; color: inherit; margin: 0; padding: 0; border: 0; border-radius: 0; background: none; }
svg { display: block; }
i { font-style: normal; }
.defs { position: absolute; width: 0; height: 0; }
.app { margin: 396px 29px 0 28px; background: #efefef; }

.tri { border: 7px solid transparent; border-top: 10px solid #222; border-bottom: 0; flex: none; }
.tri.sm { border-width: 8px 5px 0; border-top-color: #444; }
.tri.bar { box-shadow: 0 -5px 0 -1px #d5d5d5, 0 -7px 0 0 #222; }
.triR { border: 9px solid transparent; border-left: 11px solid #000; border-right: 0; flex: none; }

.combo { position: relative; display: block; }
.combo select { appearance: none; width: 100%; height: 100%; padding: 0 30px 0 4px; white-space: nowrap; overflow: hidden; outline: 0; }
.combo::after { content: ""; position: absolute; right: 7px; top: 50%; margin-top: -4px; border: 8px solid transparent; border-top: 10px solid #000; border-bottom: 0; pointer-events: none; }
.combo.grey { background: linear-gradient(#e8e8e8, #cfcfcf); border: 2px solid #fff; border-top: 3px solid #777; border-left-color: #888; }
.combo.white { background: #fff; border: 2px solid #f6f6f6; border-top: 3px solid #888; border-left: 3px solid #777; }

/* title and menu */
.head { display: grid; grid-template-columns: 84px 1fr; background: #bfbfbf; font-feature-settings: normal; }
.appbtn { grid-row: 1 / 3; height: 86px; position: relative; background: linear-gradient(#8b8b8b, #b9b9b9); border: 2px solid #222; border-bottom-width: 3px; }
.appbtn svg { width: 84px; height: 82px; }
.appbtn span { position: absolute; left: 18px; bottom: 0; font-size: 17px; line-height: 18px; font-weight: 600; }
.titlebar { display: flex; height: 53px; background: linear-gradient(90deg, #1e63bd 0%, #1a5cae 22%, #276db9 30%, #1a63b2 45%, #1563b2 60%, #164d96 75%, #1d5290 85%, #3a6c9c 100%); border-bottom: 4px solid #5a5f66; }
.qat, .info { display: flex; align-items: center; background: linear-gradient(#d9d9d9, #cfcfcf); border-top: 3px solid #777; }
.qat { width: 673px; padding-left: 18px; }
.q { width: 36px; flex: none; }
.q svg { width: 36px; height: 32px; }
.qat .q { margin-right: 15px; }
.qat .q:nth-of-type(n+4) { margin-right: 14px; }
.qat .tri.sm { margin-right: 16px; }
.qat .q:nth-of-type(6) { margin-right: 9px; }
.ws { flex: 1; height: 43px; margin-right: 10px; border: 2px solid #777; background: linear-gradient(#efefef, #dadada); font-size: 25px; }
.ws::after { border-width: 7px 4px 0; border-top-color: #555; }
.ws select { padding-right: 16px; }
.qat .tri.bar { margin: 6px 11px 0 0; }
.caption { flex: 1; margin: 0; display: flex; gap: 50px; padding-left: 840px; font-size: 26px; line-height: 46px; font-weight: 400; color: #06122e; white-space: nowrap; text-shadow: 0 0 12px #a9c8ec, 0 0 22px #8ab4e4; border-bottom: 2px solid #9cc4ea; }
.info { width: 708px; padding-left: 8px; font-size: 23px; }
.search { width: 377px; height: 44px; background: #fbfbfb; margin: 0 8px 0 11px; padding: 4px 4px 0; }
.search::placeholder { color: #666; opacity: 1; }
.info .q { margin-right: 15px; }
.vline { width: 2px; height: 44px; background: #bbb; margin: 0 16px 0 4px; }
.info .tri.sm { margin-left: -7px; }
.wbtns { width: 258px; display: grid; grid-template-columns: 63px 56px 99px; padding-left: 35px; height: 40px; background: radial-gradient(60px 60px at 124px 34px, #e8eab0, transparent); }
.wbtns button { border: 2px solid #86aed0; border-top: 0; border-left-width: 1px; display: grid; place-items: center; background: linear-gradient(#3f74a8aa, #1f5690aa); }
.wbtns button:first-child { border-radius: 0 0 0 8px; }
.wbtns button:last-child { border-radius: 0 0 8px 0; }
.wbtns svg { width: 34px; height: 30px; }

.menu { display: grid; grid-template-columns: 136px 162px 191px 162px 136px 269px 261px 274px 230px 139px 203px 241px 211px 1fr; height: 42px; padding-left: 26px; background: linear-gradient(#e9e9e9, #e4e4e4 30%, #d2d2d2 35%, #bfbfbf); font-size: 26px; line-height: 40px; }
.menu a { color: #222; text-decoration: none; white-space: nowrap; }

/* toolbars */
.toolbars { display: flex; height: 82px; }
.tb { display: flex; justify-content: space-between; border: 2px solid #999; border-top: 3px solid #fff; border-left-color: #fff; padding-top: 6px; }
.tb-main { width: 2597px; padding-left: 2px; padding-right: 4px; }
.tb-axis { width: 377px; padding-left: 6px; padding-right: 20px; }
.tb-snap { width: 646px; padding-left: 6px; padding-right: 8px; }
.grip { width: 9px; height: 66px; border: 2px solid #999; border-width: 0 2px; }
.sep { width: 10px; height: 42px; margin-top: 12px; border-left: 2px solid #aaa; border-right: 6px solid transparent; }
.t { width: 65px; height: 64px; flex: none; display: grid; place-items: center; position: relative; border: 2px solid transparent; }
.t svg { width: 48px; height: 48px; overflow: visible; }
.t.on { background: #bdfdb8; border-color: #999 #fff #fff #999; }
.t.amber { background: #f3c850; border-color: #999 #fff #fff #999; }
.t.raised { border-color: #fff #999 #999 #fff; background: #f4f4f4; }
.more { position: relative; }
.more::after { content: ""; position: absolute; right: 3px; bottom: 2px; border: 4px solid transparent; border-right-color: #000; border-bottom-color: #000; }
.big, .bigger { font-size: 44px; font-weight: 600; color: #333842; }
.bigger { font-weight: 700; }
.mid { font-size: 30px; color: #333; }
.up { place-items: start center; line-height: 38px; }
.t .lay { position: absolute; left: 7px; top: 7px; }
.c144 { width: 144px; height: 42px; font-feature-settings: normal; }
.c250 { width: 250px; height: 42px; color: #8a8a8a; font-feature-settings: normal; }

/* work area */
.work { display: grid; grid-template-columns: 81px 1fr 384px; }
.rail { display: flex; flex-direction: column; align-items: center; background: linear-gradient(90deg, #8f8f8f, #7c7c7c 70%, #5c5c5c 96%); border-right: 2px solid #555; }
.railtop { align-self: stretch; height: 21px; background: #f2f2f2; border-top: 3px solid #fff; border-bottom: 10px solid #f4f4f4; box-shadow: inset 0 -2px 0 #999; margin-bottom: auto; }
.expand { width: 40px; height: 42px; background: #c4c4c4; border: 2px solid #5c5c5c; border-radius: 5px; display: grid; place-items: center; margin-bottom: 23px; }
.swatch { width: 76px; height: 93px; background: linear-gradient(#c3ccd0, #9fc7de 60%, #a9d8f2); border: 2px solid #5d6f7a; border-radius: 4px; padding: 14px 2px 0 8px; margin-bottom: 2px; }
.swatch div { height: 58px; background: linear-gradient(#808588, #a2a5a6); border: 3px solid #77848c; }

.viewport { border: 5px solid #f7ee12; border-color: #ffee08 #f3ee38 #e6e34e #f5ee30; }
.scene { width: 100%; height: auto; }
.vlabel { font-size: 24px; fill: #d4d4d4; font-feature-settings: normal; }
.ax { font-size: 22px; }
.note { font-family: "Noto Sans CJK JP", sans-serif; font-weight: 350; font-size: 71px; fill: #e60012; font-feature-settings: normal; }

.slider { display: flex; height: 36px; background: #bdbdbd; padding-left: 2px; border-bottom: 2px solid #fff; }
.slider button { width: 33px; height: 33px; background: #efefef; border: 2px solid #fff; border-bottom-color: #999; line-height: 26px; }
.slider .thumb { width: 263px; border: 3px solid #000; border-top: 0; border-left: 2px solid #fff; }
.track { display: flex; border-top: 4px solid #9a9a9a; height: 56px; }
.mini { width: 111px; padding-left: 28px; }
.mini svg { width: 38px; height: 36px; }
.ruler { flex: 1; display: flex; position: relative; background: #c9c9c9; margin-right: 107px; padding: 0 11px 0 9px; border-bottom: 2px solid #fff; }
.now { position: absolute; left: 0; top: 0; bottom: 0; width: 19px; background: #8fb0c6; border: 2px solid #5d8099; }
.ticks { flex: 1; display: grid; grid-template-columns: repeat(20, 1fr); }
.ticks div, .last { position: relative; height: 52px; border-left: 2px solid #7a7a7a; padding-top: 24px; background: linear-gradient(90deg, #7a7a7a 2px, transparent 2px) -2px 0 / 20% 24px repeat-x; background-origin: border-box; }
.last { width: 0; margin-right: -1px; }
.ruler b { display: block; width: 60px; margin-left: -33px; text-align: center; font-weight: 400; line-height: 26px; }

/* command panel */
.panel { display: flex; flex-direction: column; padding-top: 8px; border-bottom: 2px solid #999; }
.tabs { display: grid; grid-template-columns: repeat(6, 61px); height: 52px; padding-left: 3px; border-bottom: 2px solid #999; }
.tabs button { background: #fff; border: 2px solid #999; border-bottom: 0; border-radius: 8px 8px 0 0; display: grid; place-items: center; }
.tabs .cur { background: #efefef; margin: -3px 0 -2px; }
.tabs svg { width: 44px; height: 37px; }
.namerow { display: flex; gap: 10px; margin: 11px 12px 0 22px; height: 40px; }
.namerow input, .num input, .coord input, .play input { background: #fff; border: 2px solid #fff; border-top: 3px solid #000; border-left: 3px solid #222; padding-left: 4px; }
.namerow input { flex: 1; min-width: 0; padding-left: 3px; }
.color { width: 34px; border: 2px solid #fff; border-left-color: #888; background: linear-gradient(#000 17px, #fff 17px); }
.modlist { height: 53px; margin: 12px 15px 0 22px; font-size: 21px; }
.mods { display: grid; grid-template-columns: 153px 151px; grid-auto-rows: 42px; gap: 6px; margin: 11px 0 0 34px; }
.mods button, .raise, .rhead { border: 2px solid #fff; border-right-color: #999; border-bottom-color: #999; white-space: nowrap; }
.mods button { display: flex; justify-content: center; align-items: center; }
.mods button:disabled { color: #a4a4a4; }
.stack { list-style: none; margin: 18px 22px 0; height: 201px; background: #fff; border: 2px solid #888; padding: 1px; }
.stack li { display: flex; align-items: center; height: 34px; padding-left: 13px; font-weight: 700; border-bottom: 2px solid #888; }
.stack svg { width: 24px; height: 18px; margin-right: 12px; }
.stack .sel { background: #757575; border: 0; padding-left: 17px; font-feature-settings: normal; }
.stack .sel svg { width: 24px; height: 28px; margin-right: 49px; }
.stacktools { display: flex; align-items: center; justify-content: space-between; margin: 8px 40px 0 26px; height: 48px; }
.stacktools button { width: 40px; height: 48px; display: grid; place-items: center; }
.stacktools .pressed { width: 48px; border: 2px solid #fff; border-top-color: #999; border-left-color: #999; }
.stacktools svg { width: 34px; height: 30px; }
.stacktools i { width: 2px; height: 34px; background: #aaa; }
.rule { margin: 25px 9px 0 8px; height: 3px; background: #000; border: 0; }
.scroll { flex: 1; margin: 17px 12px 14px 8px; border-top: 3px solid #999; border-right: 2px solid #fff; border-bottom: 3px solid #fff; padding: 23px 11px 0 3px; }
.rollout { border: 2px solid #999; box-shadow: inset 1px 1px #fff, 1px 1px #fff; padding: 0 4px 17px 6px; }
.rhead { width: 330px; height: 35px; margin: -19px 0 20px 3px; background: #efefef; display: grid; grid-template-columns: 1fr 1fr 1fr; align-items: center; }
.rhead span:first-child { text-align: left; padding-left: 8px; }
.num { display: flex; height: 33px; margin-bottom: 8px; align-items: center; }
.num label { flex: 1; text-align: right; padding-right: 22px; white-space: nowrap; }
.num input { width: 117px; height: 33px; padding-left: 8px; }
.spin { width: 25px; align-self: stretch; margin: 0 16px 0 5px; display: flex; flex-direction: column; justify-content: space-evenly; align-items: center; border-right: 2px solid #999; border-bottom: 2px solid #999; }
.spin i { border: 6px solid transparent; border-top: 0; border-bottom: 6px solid #000; }
.spin i + i { border-bottom: 0; border-top: 6px solid #000; }
fieldset { margin: 0; padding: 0; border: 2px solid #9e9e9e; min-width: 0; }
legend { margin-left: 12px; padding: 0 4px; line-height: 24px; }
.opt { display: flex; align-items: center; white-space: nowrap; }
.opt input { appearance: none; flex: none; width: 25px; height: 25px; margin-right: 12px; background: #fff; border: 3px solid #fff; border-top-color: #777; border-left-color: #777; }
.opt input[type=checkbox]:checked::before { content: ""; display: block; width: 19px; height: 19px; background: #000; clip-path: polygon(8% 35%, 38% 58%, 90% 12%, 90% 45%, 38% 92%, 8% 62%); }
.opt input:disabled { background: #efefef; }
.opt input:disabled::before { background: #999 !important; }
.opt input[type=radio] { width: 20px; height: 20px; border-radius: 50%; margin-right: 16px; }
.opt input[type=radio]:checked::before { content: ""; display: block; width: 10px; height: 10px; margin: 2px; border-radius: 50%; background: #000; }
.off { color: #a8a8a8; }
.cap { padding: 4px 0 11px; }
.cap > .opt { height: 37px; padding-left: 89px; }
.two { display: grid; grid-template-columns: 160px 1fr; height: 42px; padding-left: 40px; }
.out { margin-top: 8px; padding-bottom: 5px; }
.out legend { margin-bottom: -5px; }
.out .opt { height: 41px; padding-left: 78px; }
.flags { margin-top: 4px; padding-left: 3px; }
.flags .opt { height: 34px; }
.flags .sub { padding-left: 44px; }

/* status bar */
.status { display: flex; padding: 7px 0 0 2px; border-top: 1px solid #fff; height: 106px; }
.listener { width: 202px; margin-right: 13px; }
.macro { height: 44px; background: #dcc4c6; border: 2px solid #fff; border-top: 3px solid #777; border-left-color: #777; }
.script { height: 44px; margin-top: 5px; background: #fff; border: 2px solid #fff; border-top: 3px solid #888; border-left-color: #888; padding: 2px 9px; white-space: nowrap; overflow: hidden; font-feature-settings: normal; }
.dbl { width: 5px; border: 2px solid #999; border-right-color: #fff; border-width: 0 2px; margin: -7px 3px 0 0; }
.prompts { flex: 1; min-width: 0; }
.prow { display: flex; align-items: center; padding-right: 27px; }
.box { display: block; height: 44px; margin-top: 2px; border: 2px solid #fff; border-top-color: #999; border-left-color: #aaa; padding: 6px 9px; white-space: nowrap; }
.grow { flex: 1; }
.prow + .prow { padding-right: 0; }
.prow + .prow .box, .box + .box { margin-top: 7px; border-bottom-color: transparent; }
.sicons { display: grid; grid-template-columns: repeat(3, 56px); }
.sicons button { display: grid; place-items: center; }
.sicons svg { width: 38px; height: 36px; }
.coord { display: flex; align-items: center; margin-right: 22px; }
.coord:last-child { margin-right: 0; }
.coord label { width: 48px; padding-right: 8px; text-align: center; }
.coord input { width: 117px; height: 42px; }
.tagbtn { width: 45px; height: 46px; margin: 6px 0 0 7px; background: #ecd04a; border: 2px solid #999; display: grid; place-items: center; }
.tagbtn svg { width: 32px; height: 34px; }
.gridcol { width: 209px; margin-left: 7px; }
.key { width: 91px; height: 92px; margin-left: 9px; display: grid; place-items: center; }
.key svg { width: 54px; height: 32px; }
.keycol { width: 134px; margin-left: 9px; display: grid; grid-template-rows: 46px 44px; gap: 2px; height: 92px; }
.filtercol { width: 242px; margin-left: 9px; }
.filtercol .combo { width: 239px; height: 43px; }
.filtercol div { display: flex; margin-top: 5px; justify-content: space-between; }
.filtercol .raise { width: 187px; height: 44px; }
.ico { width: 44px; display: grid; place-items: center; }
.ico svg { width: 36px; height: 36px; }
.play { width: 259px; margin-left: 18px; }
.play div { display: flex; align-items: center; height: 46px; justify-content: space-between; }
.play button { width: 38px; height: 40px; display: grid; place-items: center; }
.play svg { width: 34px; height: 34px; fill: #222; }
.play div > i { width: 2px; height: 36px; background: #aaa; }
.play input { width: 131px; height: 42px; }
.play .spin { margin: 3px 0; }
.nav { display: grid; grid-template-columns: repeat(4, 49px); grid-auto-rows: 46px; margin-left: 7px; }
.nav button { display: grid; place-items: center; }
.nav svg { width: 36px; height: 36px; }
```
